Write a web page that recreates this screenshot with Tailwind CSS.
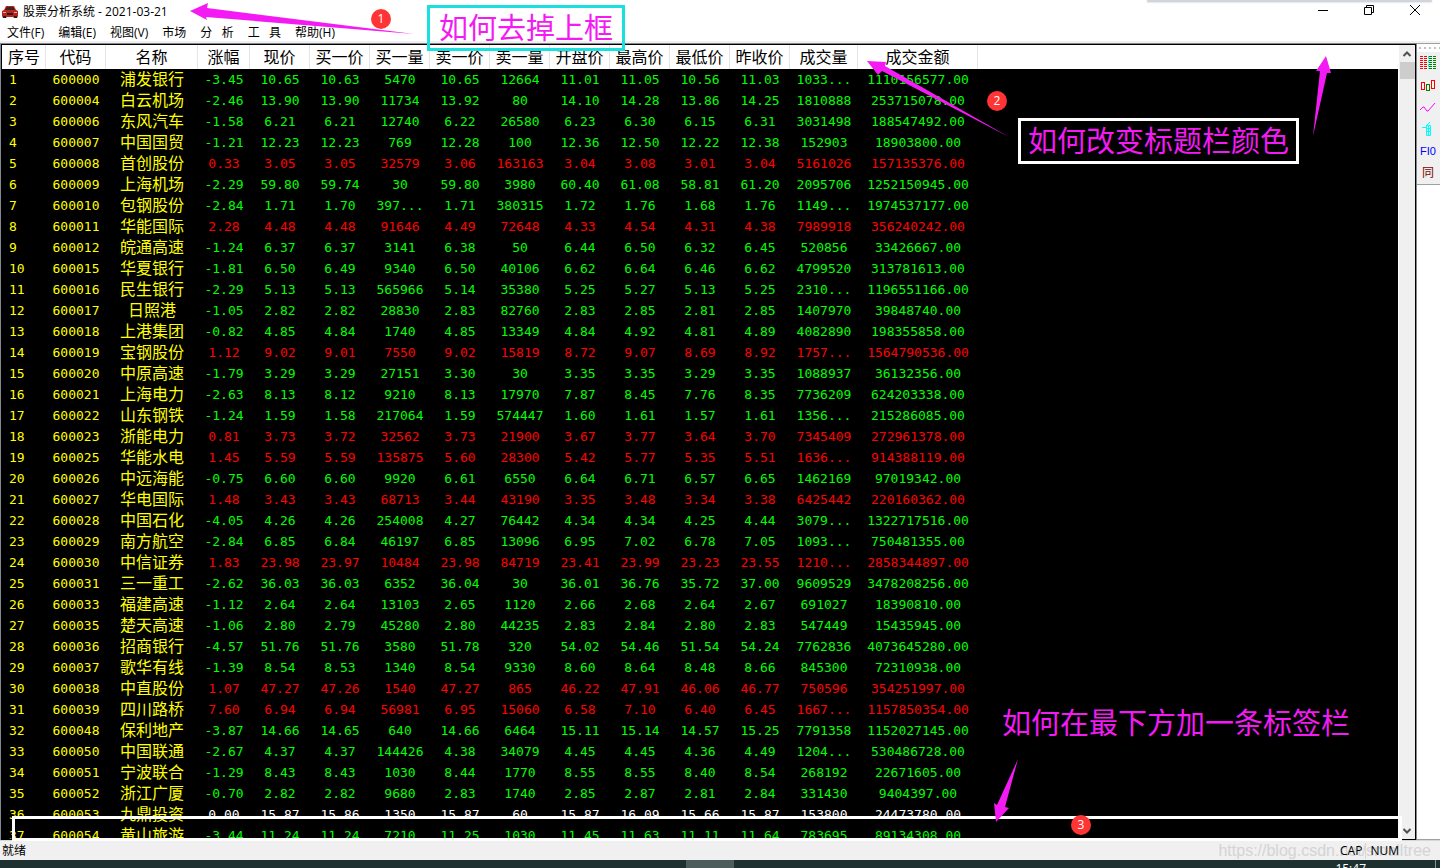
<!DOCTYPE html>
<html lang="zh-CN">
<head>
  <meta charset="UTF-8" />
  <meta name="viewport" content="width=device-width, initial-scale=1.0" />
  <title>股票分析系统</title>
  <script src="https://cdn.jsdelivr.net/npm/@tailwindcss/browser@4"></script>
</head>
<body class="relative flex flex-col h-screen overflow-hidden bg-white text-black text-xs font-['Open_Sans','Noto_Sans_CJK_SC',sans-serif]">

  <!-- Title bar -->
  <header class="relative flex items-center h-6 shrink-0 pl-[2px] pr-5">
    <svg class="w-4 h-4 mr-[5px]" viewBox="0 0 16 16">
      <path d="M4 2h8l2 4 2 1v5l-1 2h-3l-1-1H5l-1 1H1l-1-2V7l2-1z" fill="#b3261e" />
      <path d="M5 3h6l2 3H3z" fill="#3d2226" />
      <path d="M1 8h3v1H1zM12 8h3v1h-3z" fill="#f7a29c" />
      <path d="M5 9h6v2H5zM1 12h3v2H1zM12 12h3v2h-3z" fill="#33181a" />
    </svg>
    <h1>股票分析系统 - 2021-03-21</h1>
    <div class="absolute top-0 right-2 w-[285px] h-px bg-gray-300 shadow-[0_1px_2px_#9ca3af]"></div>
    <div class="flex items-center gap-9 ml-auto pb-1">
      <button class="block" aria-label="最小化"><svg class="w-[10px] h-[10px]" viewBox="0 0 10 10"><path d="M0 5.5h10" stroke="#000" fill="none" /></svg></button>
      <button class="block" aria-label="还原"><svg class="w-[10px] h-[10px]" viewBox="0 0 10 10"><path d="M.5 2.5h7v7h-7zM2.500 2V.5h7v7H8" stroke="#000" fill="none" /></svg></button>
      <button class="block" aria-label="关闭"><svg class="w-[10px] h-[10px]" viewBox="0 0 10 10"><path d="M0 0l10 10M10 0L0 10" stroke="#000" fill="none" /></svg></button>
    </div>
  </header>

  <!-- Menu -->
  <nav class="flex items-center gap-[14px] h-[17px] shrink-0 pl-[7px]">
    <a href="#">文件(F)</a>
    <a href="#">编辑(E)</a>
    <a href="#">视图(V)</a>
    <a href="#">市场</a>
    <a href="#">分&nbsp;&nbsp;&nbsp;析</a>
    <a href="#">工&nbsp;&nbsp;&nbsp;具</a>
    <a href="#">帮助(H)</a>
  </nav>
  <div class="h-[2px] shrink-0 bg-[#f0f0f0]"></div>

  <main class="flex flex-1 min-h-0">
    <!-- Stock list -->
    <div class="flex flex-1 min-w-0 border-t border-x border-[#82878f]">
      <div class="flex flex-1 min-w-0 border border-black">
        <div class="flex-1 min-w-0 overflow-hidden bg-black">
          <table class="w-full table-fixed border-separate border-spacing-0 text-[13px] leading-[20px] text-center whitespace-nowrap font-['DejaVu_Sans_Mono','Noto_Sans_CJK_SC',monospace]">
            <colgroup>
              <col class="w-[44px]" /><col class="w-[60px]" /><col class="w-[92px]" /><col class="w-[52px]" />
              <col class="w-[60px]" /><col class="w-[60px]" /><col class="w-[60px]" /><col class="w-[60px]" /><col class="w-[60px]" />
              <col class="w-[60px]" /><col class="w-[60px]" /><col class="w-[60px]" /><col class="w-[60px]" />
              <col class="w-[68px]" /><col class="w-[120px]" /><col />
            </colgroup>
            <thead>
              <tr id="heads" class="h-6 bg-white text-base leading-[22px]"></tr>
            </thead>
            <tbody id="rows"></tbody>
          </table>
        </div>
        <!-- Scroll bar -->
        <div class="flex flex-col items-center w-[17px] bg-[#f0f0f0] border-l border-white">
          <svg class="w-4 h-[17px] shrink-0" viewBox="0 0 16 17"><path d="M4.500 11L8 7.500l3.500 3.500" stroke="#505050" stroke-width="2" fill="none" /></svg>
          <div class="w-[15px] h-[17px] bg-[#cdcdcd]"></div>
          <svg class="w-4 h-[17px] shrink-0 mt-auto" viewBox="0 0 16 17"><path d="M4.500 7L8 10.500 11.500 7" stroke="#505050" stroke-width="2" fill="none" /></svg>
        </div>
      </div>
    </div>

    <!-- Tool bar -->
    <aside class="flex flex-col w-[23px] border-y border-[#a0a0a0]">
      <div class="flex items-center h-2 gap-[3px] pl-[2px] overflow-hidden">
        <i class="size-[2px] shrink-0 bg-[#c0c0c0]"></i><i class="size-[2px] shrink-0 bg-[#c0c0c0]"></i><i class="size-[2px] shrink-0 bg-[#c0c0c0]"></i><i class="size-[2px] shrink-0 bg-[#c0c0c0]"></i><i class="size-[2px] shrink-0 bg-[#c0c0c0]"></i>
      </div>
      <div class="flex flex-col bg-[#f0f0f0] border-b border-[#a0a0a0] pl-[3px]">
        <button class="h-[22px]" aria-label="行情">
          <svg class="w-4 h-[22px]" viewBox="0 0 16 22" shape-rendering="crispEdges" fill="none">
            <g stroke-width="3" stroke-dasharray="1 1">
              <path d="M1.500 4v13M5.500 4v13" stroke="#f00" />
              <path d="M10.500 4v13M14.500 4v13" stroke="#008000" />
              <path d="M8.500 4v13" stroke="#0ff" stroke-width="1" stroke-dasharray="3 1" />
            </g>
          </svg>
        </button>
        <button class="h-[22px]" aria-label="K线">
          <svg class="w-4 h-[22px]" viewBox="0 0 16 22" shape-rendering="crispEdges" fill="none">
            <path d="M1.500 8.500h3v7h-3zM11.500 6.500h3v8h-3z" stroke="#f00" />
            <path d="M6.500 10.500h3v6h-3z" stroke="#008000" />
          </svg>
        </button>
        <button class="h-[22px]" aria-label="分时">
          <svg class="w-4 h-[22px]" viewBox="0 0 16 22" fill="none"><path d="M0 14l3-3h1l3 4h1l7-8" stroke="#f0f" /></svg>
        </button>
        <button class="h-[22px]" aria-label="指标">
          <svg class="w-4 h-[22px]" viewBox="0 0 16 22" fill="none" stroke="#0ff"><path d="M6.500 7.500h4v10h-4zM6 10.500h5M6 13.500h5M2 9.500h4M8.500 7v10M6 8l4-4" /></svg>
        </button>
        <button class="h-[22px] text-left text-[11px] leading-[22px] text-[#00f] font-['Liberation_Sans',sans-serif]">FI0</button>
        <button class="h-[22px] text-left pl-[2px] text-[12px] leading-[20px] text-[#800000]">同</button>
      </div>
    </aside>
  </main>

  <!-- Status bar -->
  <footer class="relative flex items-center h-5 shrink-0 border-t border-[#d7d7d7] bg-[#f0f0f0] pl-[2px] pr-[41px]">
    <span>就绪</span>
    <span class="absolute right-[9px] text-base text-[#d4d4d4] font-['Liberation_Sans',sans-serif]">https://blog.csdn.net/smalltree</span>
    <span class="relative ml-auto pr-[3px] border-r border-[#d7d7d7]">CAP</span>
    <span class="relative pl-1">NUM</span>
  </footer>
  <div class="flex h-2 shrink-0 overflow-hidden bg-[#1e3130] text-white leading-[18px]">
    <div class="w-12 ml-[686px] bg-[#4d5d5b]"></div>
    <span class="ml-auto mr-[69px]">15:47</span>
    <div class="w-px mr-1 bg-[#8a9695]"></div>
  </div>

  <!-- Notes drawn over the window -->
  <svg class="absolute top-0 left-0 w-[1440px] h-[868px] pointer-events-none" viewBox="0 0 1440 868" fill="#f31af3">
    <path d="M190 11L208 3 207 8 414 34 206 17 207 20z" />
    <path d="M867 61L886 62 885 66 1009 137 882 71 878 75z" />
    <path d="M1326 56L1316 71 1320 71 1313 136 1327 73 1331 73z" />
  </svg>
  <div class="absolute top-[5px] left-[427px] px-[9px] h-[46px] border-3 border-[#1adfdf] text-[29px] leading-[36px] text-[#f31af3] font-['Noto_Sans_CJK_SC',sans-serif]">如何去掉上框</div>
  <div class="absolute top-[118px] left-[1018px] px-[7px] h-[46px] border-3 border-white text-[29px] leading-[36px] text-[#f31af3] font-['Noto_Sans_CJK_SC',sans-serif]">如何改变标题栏颜色</div>
  <div class="absolute top-[703px] left-[1002px] text-[29px] leading-[36px] text-[#f31af3] font-['Noto_Sans_CJK_SC',sans-serif]">如何在最下方加一条标签栏</div>
  <div class="absolute top-[816px] left-3 w-[1390px] h-[25px] border-3 border-r-4 border-white"></div>
  <svg class="absolute top-[759px] left-[994px] w-[24px] h-[63px]" viewBox="994 759 24 63" fill="#f31af3"><path d="M996 822L994 803 997 805 1018 759 1005 807 1009 808z" /></svg>
  <span class="absolute top-[9px] left-[371px] size-5 rounded-full bg-[#ff3535] text-center leading-5 text-white">1</span>
  <span class="absolute top-[91px] left-[987px] size-5 rounded-full bg-[#ff3535] text-center leading-5 text-white">2</span>
  <span class="absolute top-[815px] left-[1071px] size-5 rounded-full bg-[#ff3535] text-center leading-5 text-white">3</span>

  <script>
    const heads = ['序号', '代码', '名称', '涨幅', '现价', '买一价', '买一量', '卖一价', '卖一量', '开盘价', '最高价', '最低价', '昨收价', '成交量', '成交金额'];

    // code name change price bid bidVol ask askVol open high low prevClose volume amount
    const data = `
600000 浦发银行 -3.45 10.65 10.63 5470 10.65 12664 11.01 11.05 10.56 11.03 1033... 1110156577.00
600004 白云机场 -2.46 13.90 13.90 11734 13.92 80 14.10 14.28 13.86 14.25 1810888 253715078.00
600006 东风汽车 -1.58 6.21 6.21 12740 6.22 26580 6.23 6.30 6.15 6.31 3031498 188547492.00
600007 中国国贸 -1.21 12.23 12.23 769 12.28 100 12.36 12.50 12.22 12.38 152903 18903800.00
600008 首创股份 0.33 3.05 3.05 32579 3.06 163163 3.04 3.08 3.01 3.04 5161026 157135376.00
600009 上海机场 -2.29 59.80 59.74 30 59.80 3980 60.40 61.08 58.81 61.20 2095706 1252150945.00
600010 包钢股份 -2.84 1.71 1.70 397... 1.71 380315 1.72 1.76 1.68 1.76 1149... 1974537177.00
600011 华能国际 2.28 4.48 4.48 91646 4.49 72648 4.33 4.54 4.31 4.38 7989918 356240242.00
600012 皖通高速 -1.24 6.37 6.37 3141 6.38 50 6.44 6.50 6.32 6.45 520856 33426667.00
600015 华夏银行 -1.81 6.50 6.49 9340 6.50 40106 6.62 6.64 6.46 6.62 4799520 313781613.00
600016 民生银行 -2.29 5.13 5.13 565966 5.14 35380 5.25 5.27 5.13 5.25 2310... 1196551166.00
600017 日照港 -1.05 2.82 2.82 28830 2.83 82760 2.83 2.85 2.81 2.85 1407970 39848740.00
600018 上港集团 -0.82 4.85 4.84 1740 4.85 13349 4.84 4.92 4.81 4.89 4082890 198355858.00
600019 宝钢股份 1.12 9.02 9.01 7550 9.02 15819 8.72 9.07 8.69 8.92 1757... 1564790536.00
600020 中原高速 -1.79 3.29 3.29 27151 3.30 30 3.35 3.35 3.29 3.35 1088937 36132356.00
600021 上海电力 -2.63 8.13 8.12 9210 8.13 17970 7.87 8.45 7.76 8.35 7736209 624203338.00
600022 山东钢铁 -1.24 1.59 1.58 217064 1.59 574447 1.60 1.61 1.57 1.61 1356... 215286085.00
600023 浙能电力 0.81 3.73 3.72 32562 3.73 21900 3.67 3.77 3.64 3.70 7345409 272961378.00
600025 华能水电 1.45 5.59 5.59 135875 5.60 28300 5.42 5.77 5.35 5.51 1636... 914388119.00
600026 中远海能 -0.75 6.60 6.60 9920 6.61 6550 6.64 6.71 6.57 6.65 1462169 97019342.00
600027 华电国际 1.48 3.43 3.43 68713 3.44 43190 3.35 3.48 3.34 3.38 6425442 220160362.00
600028 中国石化 -4.05 4.26 4.26 254008 4.27 76442 4.34 4.34 4.25 4.44 3079... 1322717516.00
600029 南方航空 -2.84 6.85 6.84 46197 6.85 13096 6.95 7.02 6.78 7.05 1093... 750481355.00
600030 中信证券 1.83 23.98 23.97 10484 23.98 84719 23.41 23.99 23.23 23.55 1210... 2858344897.00
600031 三一重工 -2.62 36.03 36.03 6352 36.04 30 36.01 36.76 35.72 37.00 9609529 3478208256.00
600033 福建高速 -1.12 2.64 2.64 13103 2.65 1120 2.66 2.68 2.64 2.67 691027 18390810.00
600035 楚天高速 -1.06 2.80 2.79 45280 2.80 44235 2.83 2.84 2.80 2.83 547449 15435945.00
600036 招商银行 -4.57 51.76 51.76 3580 51.78 320 54.02 54.46 51.54 54.24 7762836 4073645280.00
600037 歌华有线 -1.39 8.54 8.53 1340 8.54 9330 8.60 8.64 8.48 8.66 845300 72310938.00
600038 中直股份 1.07 47.27 47.26 1540 47.27 865 46.22 47.91 46.06 46.77 750596 354251997.00
600039 四川路桥 7.60 6.94 6.94 56981 6.95 15060 6.58 7.10 6.40 6.45 1667... 1157850354.00
600048 保利地产 -3.87 14.66 14.65 640 14.66 6464 15.11 15.14 14.57 15.25 7791358 1152027145.00
600050 中国联通 -2.67 4.37 4.37 144426 4.38 34079 4.45 4.45 4.36 4.49 1204... 530486728.00
600051 宁波联合 -1.29 8.43 8.43 1030 8.44 1770 8.55 8.55 8.40 8.54 268192 22671605.00
600052 浙江广厦 -0.70 2.82 2.82 9680 2.83 1740 2.85 2.87 2.81 2.84 331430 9404397.00
600053 九鼎投资 0.00 15.87 15.86 1350 15.87 60 15.87 16.09 15.66 15.87 153800 24473780.00
600054 黄山旅游 -3.44 11.24 11.24 7210 11.25 1030 11.45 11.63 11.11 11.64 783695 89134308.00`;

    document.getElementById('heads').innerHTML = heads.map((h, i) =>
      `<th class="${i === 0 ? 'p-0 pt-[2px] pl-[6px] text-left font-normal border-r border-[#e5e5e5]' : 'p-0 pt-[2px] font-normal border-r border-[#e5e5e5]'}">${h}</th>`
    ).join('') + '<td></td>';

    document.getElementById('rows').innerHTML = data.trim().split('\n').map((line, n) => {
      const [code, name, ...nums] = line.split(' ');
      const change = parseFloat(nums[0]);
      const color = change > 0 ? 'text-[#ff0000]' : change < 0 ? 'text-[#00ff00]' : 'text-white';
      return `<tr class="h-[21px] ${color}">
        <td class="p-0 pl-[7px] text-left text-[#ffff00]">${n + 1}</td>
        <td class="p-0 text-[#ffff00]">${code}</td>
        <td class="p-0 text-base leading-[20px] text-[#ffff00]">${name}</td>
        ${nums.map(v => `<td class="p-0">${v}</td>`).join('')}
        <td></td>
      </tr>`;
    }).join('');
  </script>
</body>
</html>
